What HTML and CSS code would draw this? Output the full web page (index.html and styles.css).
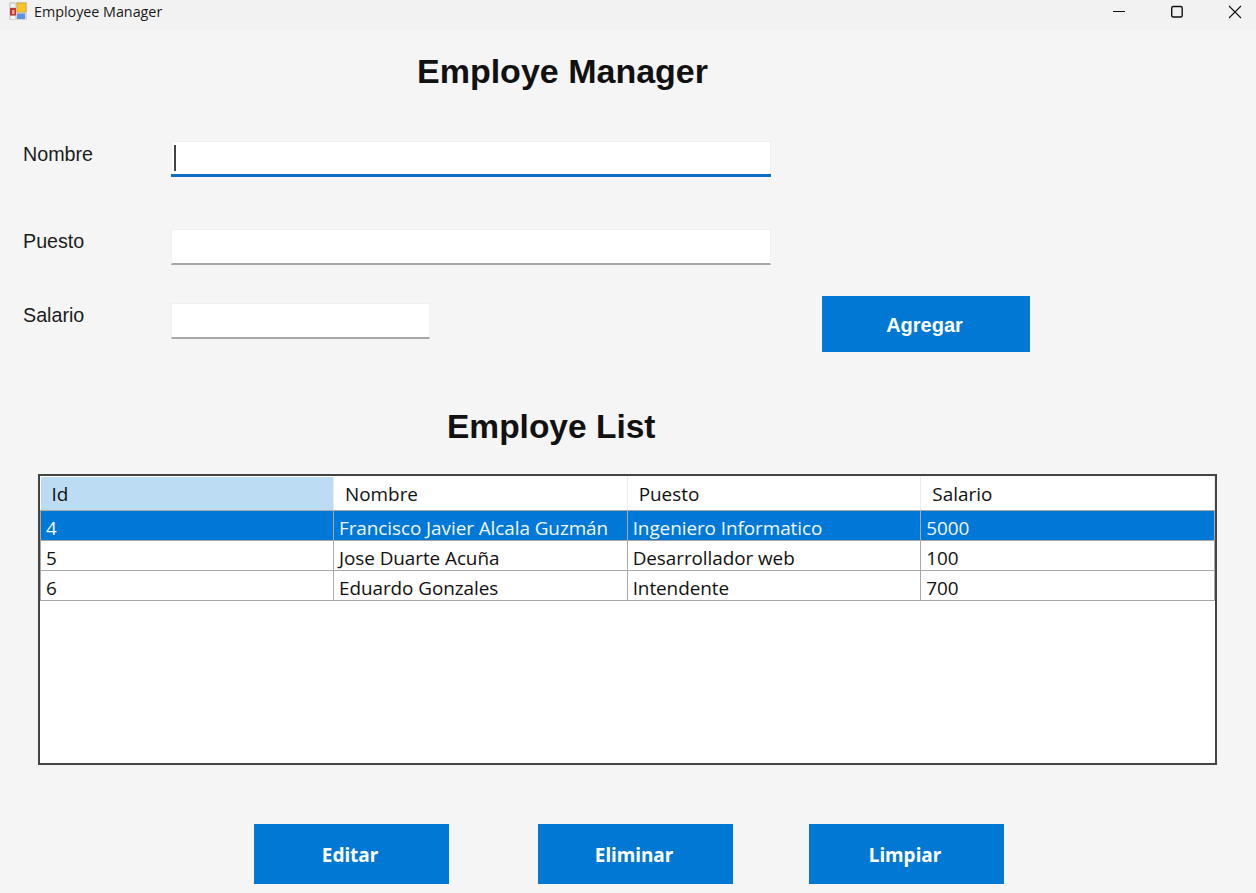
FILE: index.html
```html
<!DOCTYPE html>
<html lang="es">
<head>
    <meta charset="UTF-8">
    <meta name="viewport" content="width=device-width, initial-scale=1.0">
    <title>Employee Manager</title>
    <link rel="stylesheet" href="styles.css">
</head>
<body>
    <header class="titlebar">
        <svg class="app-icon" width="18" height="18" viewBox="0 0 18 18">
            <rect x="0" y="0" width="18" height="18" rx="1" fill="#d6d6d6"/>
            <rect x="2" y="2" width="4" height="3" fill="#f4f4f4"/>
            <rect x="2" y="14" width="4" height="3" fill="#f4f4f4"/>
            <rect x="1" y="6" width="6" height="7.5" fill="#c8352e"/>
            <rect x="3" y="8" width="2.5" height="4" fill="#efa89a"/>
            <rect x="8" y="1" width="9" height="9" fill="#f6c52c" stroke="#c99a1a" stroke-width="0.6"/>
            <rect x="8" y="11.5" width="8" height="5.5" fill="#5b93e0"/>
        </svg>
        <span class="app-name">Employee Manager</span>
        <div class="window-controls">
            <svg width="14" height="14" viewBox="0 0 14 14"><path d="M1 6.5h12" stroke="#111" stroke-width="1" fill="none"/></svg>
            <svg width="14" height="14" viewBox="0 0 14 14"><rect x="1.7" y="1.5" width="10.5" height="10.5" rx="1.5" stroke="#111" stroke-width="1.4" fill="none"/></svg>
            <svg width="14" height="14" viewBox="0 0 14 14"><path d="M1 1l12 12M13 1L1 13" stroke="#111" stroke-width="1.1" fill="none"/></svg>
        </div>
    </header>

    <main class="window">
        <h1 class="title title-manager">Employe Manager</h1>

        <form class="employee-form">
            <label class="field-label label-nombre" for="nombre">Nombre</label>
            <div class="input-box input-focus" id="nombre"><span class="caret"></span></div>

            <label class="field-label label-puesto" for="puesto">Puesto</label>
            <div class="input-box input-puesto" id="puesto"></div>

            <label class="field-label label-salario" for="salario">Salario</label>
            <div class="salario-row">
                <div class="input-box input-salario" id="salario"></div>
                <button type="button" class="btn btn-agregar">Agregar</button>
            </div>
        </form>

        <h2 class="title title-list">Employe List</h2>

        <div class="grid-frame">
            <table class="grid">
                <thead>
                    <tr>
                        <th class="col-active">Id</th>
                        <th>Nombre</th>
                        <th>Puesto</th>
                        <th>Salario</th>
                    </tr>
                </thead>
                <tbody>
                    <tr class="selected">
                        <td>4</td>
                        <td>Francisco Javier Alcala Guzmán</td>
                        <td>Ingeniero Informatico</td>
                        <td>5000</td>
                    </tr>
                    <tr>
                        <td>5</td>
                        <td>Jose Duarte Acuña</td>
                        <td>Desarrollador web</td>
                        <td>100</td>
                    </tr>
                    <tr>
                        <td>6</td>
                        <td>Eduardo Gonzales</td>
                        <td>Intendente</td>
                        <td>700</td>
                    </tr>
                </tbody>
            </table>
        </div>

        <div class="actions">
            <button type="button" class="btn btn-action">Editar</button>
            <button type="button" class="btn btn-action btn-eliminar">Eliminar</button>
            <button type="button" class="btn btn-action btn-limpiar">Limpiar</button>
        </div>
    </main>
</body>
</html>
```

FILE: styles.css
```css
* {
    box-sizing: border-box;
}

html, body {
    margin: 0;
    height: 893px;
    overflow: hidden;
}

body {
    font-family: "Open Sans", sans-serif;
    background-color: #f5f5f5;
    color: #111;
}

/* barra de titulo */
.titlebar {
    display: flex;
    align-items: center;
    height: 30px;
    padding-left: 9px;
    padding-bottom: 6px;
    background-color: #f2f2f2;
}

.app-icon {
    flex: none;
    margin-bottom: 2px;
}

.app-name {
    margin-left: 7px;
    margin-top: -2px;
    font-size: 14.3px;
    color: #1a1a1a;
}

.window-controls {
    display: flex;
    gap: 44px;
    margin-left: auto;
    margin-right: 14px;
}

/* formulario */
.window {
    display: flex;
    flex-direction: column;
    padding-top: 21px;
}

.title {
    margin: 0;
    font-family: "Liberation Sans", Arial, sans-serif;
    font-weight: bold;
    line-height: 40px;
    color: #111;
}

.title-manager {
    margin-left: 417px;
    font-size: 34px;
}

.employee-form {
    display: grid;
    grid-template-columns: 148px 1fr;
    margin-top: 50px;
    padding-left: 23px;
}

.field-label {
    font-family: "Liberation Sans", Arial, sans-serif;
    font-size: 19.7px;
    line-height: 24px;
    color: #1c1c1c;
}

.label-nombre {
    padding-top: 1px;
}

.label-puesto {
    margin-top: 52px;
}

.label-salario {
    margin-top: 38px;
}

.input-box {
    height: 36px;
    width: 600px;
    background-color: #fff;
    border: 1px solid #f0f0f0;
    border-bottom: 2px solid #a8a8a8;
}

.input-focus {
    position: relative;
    border-bottom-color: #0a6cc4;
}

/* la linea azul sale un poco del control */
.input-focus::after {
    content: "";
    position: absolute;
    left: -1px;
    right: -1px;
    bottom: -2px;
    height: 3px;
    background-color: #0f6fc6;
}

.caret {
    position: absolute;
    left: 2px;
    top: 3px;
    width: 2px;
    height: 26px;
    background-color: #444;
}

.input-puesto {
    margin-top: 52px;
}

.salario-row {
    display: flex;
    align-items: flex-start;
    margin-top: 31px;
}

.input-salario {
    width: 259px;
    margin-top: 7px;
}

.btn {
    border: none;
    background-color: #0078d4;
    color: #fff;
    font-weight: bold;
    padding: 0;
}

.btn-agregar {
    width: 208px;
    height: 56px;
    margin-left: 392px;
    padding: 3px 3px 0 0;
    font-family: "Liberation Sans", Arial, sans-serif;
    font-size: 20px;
}

/* lista */
.title-list {
    margin-top: 55px;
    margin-left: 447px;
    font-size: 33.5px;
}

.grid-frame {
    width: 1179px;
    height: 291px;
    margin-top: 27px;
    margin-left: 38px;
    background-color: #fff;
    border: 2px solid #444;
}

.grid {
    width: 1175px;
    border-collapse: collapse;
    table-layout: fixed;
    font-size: 18.9px;
}

.grid th {
    height: 34px;
    padding: 0 0 0 11px;
    text-align: left;
    font-weight: normal;
    background-color: #fff;
    border-top: 1px solid #fff;
    border-right: 1px solid #ececec;
    border-bottom: 1px solid #a8a8a8;
}

.grid th:first-child {
    width: 293px;
}

.grid th.col-active {
    background-color: #bcdcf4;
}

.grid td {
    height: 30px;
    padding: 4px 0 0 5px;
    line-height: 24px;
    letter-spacing: -0.06px;
    border: 1px solid #a8a8a8;
    white-space: nowrap;
    overflow: hidden;
}

.grid .selected td {
    background-color: #0078d7;
    color: #f2f8fd;
}

/* botones de abajo */
.actions {
    display: flex;
    margin-top: 59px;
    padding-left: 254px;
}

.btn-action {
    width: 195px;
    height: 60px;
    padding: 2px 3px 0 0;
    font-family: "Noto Sans", sans-serif;
    font-size: 19px;
}

.btn-eliminar {
    margin-left: 89px;
}

.btn-limpiar {
    margin-left: 76px;
}
```
